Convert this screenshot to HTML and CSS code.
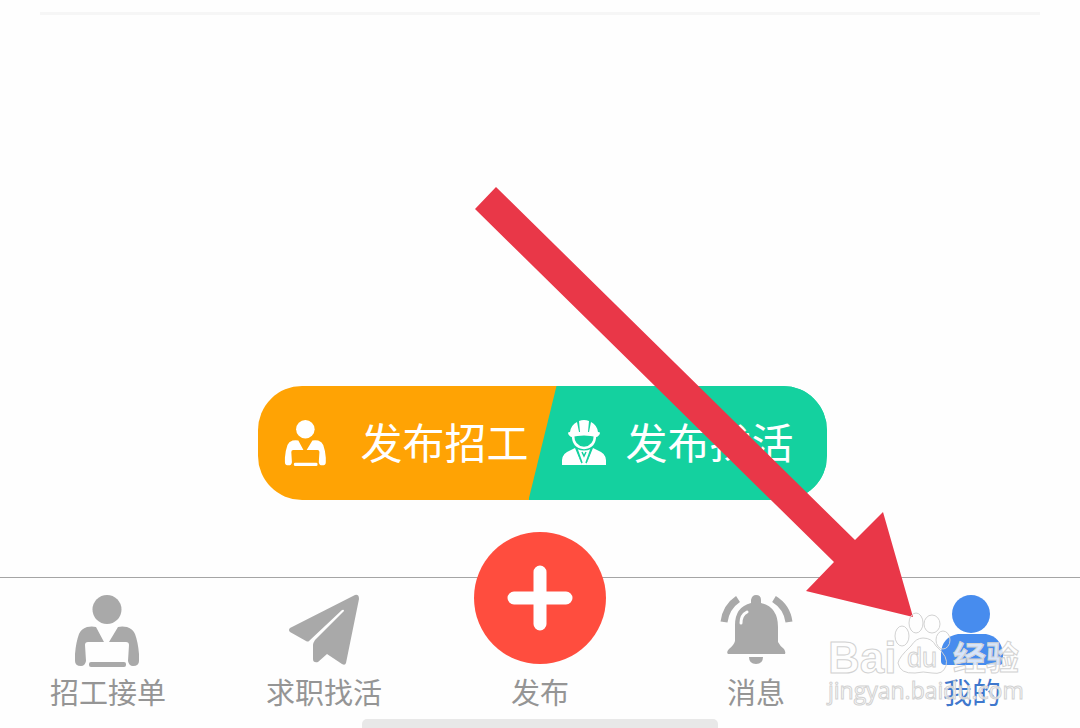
FILE: index.html
```html
<!DOCTYPE html>
<html lang="zh-CN">
<head>
    <meta charset="utf-8">
    <meta name="viewport" content="width=device-width, initial-scale=1">
    <link rel="stylesheet" href="styles.css">
    <title>我的</title>
</head>
<body>
<svg class="symbols" aria-hidden="true">
    <symbol id="worker" viewBox="0 0 72 72">
        <circle cx="35" cy="14.5" r="14.5"/>
        <path d="M15 32 Q20 31 24 32 L32 47 H16 Q13 47 13 50 L14 66 Q13 71 9 71 Q3 71 3 66 V59 Q4 47 7 39 Q9 34 15 32Z"/>
        <path d="M55 32 Q50 31 46 32 L37 47 H54 Q57 47 57 50 L56 66 Q57 71 61 71 Q67 71 67 66 V59 Q66 47 63 39 Q61 34 55 32Z"/>
        <rect x="17" y="67" width="37" height="5" rx="2"/>
    </symbol>
</svg>

<main class="content">
    <hr class="divider">
    <div class="publish-bar">
        <button class="publish publish-hire" type="button">
            <svg class="publish-icon" aria-hidden="true"><use href="#worker"/></svg>
            <span class="publish-label">发布招工</span>
        </button>
        <button class="publish publish-work" type="button">
            <svg class="publish-icon" viewBox="0 0 46 46" aria-hidden="true">
                <path d="M9 12 Q10 5 16 2 L18 12Z M18 1 Q23 -1 28 1 L27 12 H19Z M30 2 Q36 5 37 12 H28Z"/>
                <path d="M7 13 Q7 12 9 12 H37 Q39 12 39 13 Q39 15 36 17 Q23 14 10 17 Q7 15 7 13Z"/>
                <path class="line" d="M12 15 Q12 27 23 28 Q34 27 34 15"/>
                <path d="M1 45 Q0 35 6 32 Q10 30 14 28 L21 45Z M45 45 Q46 35 40 32 Q36 30 32 28 L25 45Z M16 29 Q23 32 30 29 L25 45 H21Z"/>
                <path class="cut" d="M16 29 L21 43 M30 29 L25 43 M21 32 L23 36 L25 32"/>
            </svg>
            <span class="publish-label">发布找活</span>
        </button>
    </div>
</main>

<footer class="footer">
    <nav class="tabs">
        <a class="tab" href="#hire">
            <svg class="tab-icon" aria-hidden="true"><use href="#worker"/></svg>
            招工接单
        </a>
        <a class="tab" href="#work">
            <svg class="tab-icon" viewBox="0 0 72 72" aria-hidden="true">
                <path d="M2 33 L67 0 Q71 -1 71 4 L58 68 Q57 71 54 69 L39 59 L30 67 Q25 68 25 64 V50 Q25 48 27 45 L56 16 Q56 14 54 15 L21 46 Q20 47 18 46 L2 37 Q0 35 2 33Z"/>
            </svg>
            求职找活
        </a>
        <button class="tab" type="button">
            <svg class="tab-add" viewBox="0 0 132 132" aria-hidden="true">
                <circle cx="66" cy="66" r="66"/>
                <path d="M66 40 V92 M40 66 H92"/>
            </svg>
            发布
        </button>
        <a class="tab" href="#messages">
            <svg class="tab-icon" viewBox="0 0 72 72" aria-hidden="true">
                <path d="M31 8 V5 Q32 0 36 0 Q41 0 41 5 V8 Q58 12 58 32 V47 Q60 51 64 54 Q66 57 65 59 H8 Q6 57 9 54 Q14 50 15 46 V30 Q15 12 31 8Z"/>
                <path d="M29 62 H43 Q43 69 36 69 Q29 69 29 62Z"/>
                <path class="wave" d="M18 4 Q6 12 4 27 M54 4 Q67 12 69 27"/>
                <path class="shine" d="M21 28 Q21 20 27 17"/>
            </svg>
            消息
        </a>
        <a class="tab active" href="#mine">
            <svg class="tab-icon" viewBox="0 0 72 72" aria-hidden="true">
                <circle cx="35" cy="19" r="19"/>
                <path d="M5 66 V58 Q6 42 22 39 H50 Q65 42 67 58 V66 Q67 70 63 70 H9 Q5 70 5 66Z"/>
            </svg>
            我的
        </a>
    </nav>
    <div class="home-indicator"></div>

    <svg class="arrow" viewBox="0 0 438 430" aria-hidden="true">
        <path d="M21 0 L380 353 L408 325 L438 430 L331 404 L359 375 L0 22Z"/>
    </svg>

    <svg class="watermark" viewBox="0 0 200 100">
        <g class="outline">
            <ellipse cx="88" cy="17" rx="7" ry="10"/>
            <ellipse cx="104" cy="18" rx="8" ry="9"/>
            <ellipse cx="74" cy="30" rx="7" ry="10"/>
            <ellipse cx="115" cy="34" rx="7" ry="9"/>
            <path d="M95 32 Q104 32 108 40 Q121 51 118 60 Q115 69 104 67 Q95 65 87 67 Q72 68 70 57 Q71 51 83 40 Q88 32 95 32Z"/>
        </g>
        <text class="mark-name" x="0" y="67">Bai</text>
        <text class="mark-du" x="79" y="61">du</text>
        <text class="mark-cjk" x="125" y="64">经验</text>
        <text class="mark-url" x="0" y="93">jingyan.baidu.com</text>
    </svg>
</footer>
</body>
</html>
```

FILE: styles.css
```css
body {
    margin: 0;
    min-height: 100vh;
    display: flex;
    flex-direction: column;
    font-family: "Noto Sans CJK SC", sans-serif;
    background-color: #fefefe;
}

button {
    border: 0;
    padding: 0;
    background: none;
    font-family: inherit;
    cursor: pointer;
}

.symbols {
    position: absolute;
    width: 0;
    height: 0;
}

.content {
    flex: 1;
    display: flex;
    flex-direction: column;
    justify-content: space-between;
    align-items: center;
    padding: 12px 40px 77px;
}

.divider {
    width: 100%;
    height: 3px;
    margin: 0;
    border: 0;
    background-color: #f6f6f6;
}

.publish-bar {
    display: flex;
    margin-left: 5px;
    border-radius: 44px;
    overflow: hidden;
    background: linear-gradient(to right, #ffa304 60%, #14d19f 60%);
}

.publish {
    display: flex;
    align-items: center;
    height: 114px;
    color: white;
    font-size: 42px;
    white-space: nowrap;
}

.publish-hire {
    gap: 31px;
    padding-left: 25px;
}

.publish-work {
    gap: 19px;
    padding: 0 33px 0 32px;
    background-color: #14d19f;
    clip-path: polygon(28px 0, 100% 0, 100% 100%, 0 100%);
}

.publish-label {
    padding-bottom: 6px;
}

.publish-icon {
    width: 46px;
    height: 46px;
    fill: white;
}

.publish-icon .line {
    fill: none;
    stroke: white;
    stroke-width: 2.5;
}

.publish-icon .cut {
    fill: none;
    stroke: #14d19f;
    stroke-width: 1.5;
}

.footer {
    position: relative;
    border-top: 1px solid #a5a5a5;
}

.tabs {
    display: grid;
    grid-template-columns: repeat(5, 1fr);
    grid-template-rows: 131px;
    align-items: end;
    padding-bottom: 10px;
}

.tab {
    display: flex;
    flex-direction: column;
    align-items: center;
    gap: 6px;
    color: #959595;
    font-size: 29px;
    line-height: 36px;
    text-decoration: none;
}

.tab-icon {
    width: 72px;
    height: 72px;
    fill: #a9a9a9;
    overflow: visible;
}

.tab-icon .wave {
    fill: none;
    stroke: #a9a9a9;
    stroke-width: 7;
}

.tab-icon .shine {
    fill: none;
    stroke: white;
    stroke-width: 3;
    stroke-linecap: round;
}

/* taller than the bar, so the circle rises above its border */
.tab-add {
    width: 132px;
    height: 132px;
    margin-bottom: 3px;
    fill: #ff4d3e;
}

.tab-add path {
    stroke: white;
    stroke-width: 13;
    stroke-linecap: round;
}

.active {
    color: #3f78cd;
}

.active .tab-icon {
    fill: #478cee;
}

.home-indicator {
    width: 33%;
    height: 9px;
    margin: 0 auto;
    border-radius: 5px 5px 0 0;
    background-color: #e8e8e8;
}

/* lies over the page and points at the last tab */
.arrow {
    position: absolute;
    right: 167px;
    bottom: 111px;
    width: 438px;
    height: 430px;
    fill: #e93748;
    pointer-events: none;
}

.watermark {
    position: absolute;
    right: 52px;
    bottom: 22px;
    width: 200px;
    height: 100px;
    overflow: visible;
    pointer-events: none;
    fill: rgba(255, 255, 255, 0.8);
    stroke: #d2d2d2;
    stroke-width: 1;
    font-family: "Liberation Sans", "Noto Sans CJK SC", sans-serif;
}

.outline {
    fill: none;
}

.mark-name {
    font-size: 44px;
    font-weight: bold;
}

.mark-du {
    font-size: 27px;
}

.mark-cjk {
    font-size: 33px;
    font-weight: bold;
}

.mark-url {
    font-family: "Open Sans", sans-serif;
    font-size: 23px;
}
```
